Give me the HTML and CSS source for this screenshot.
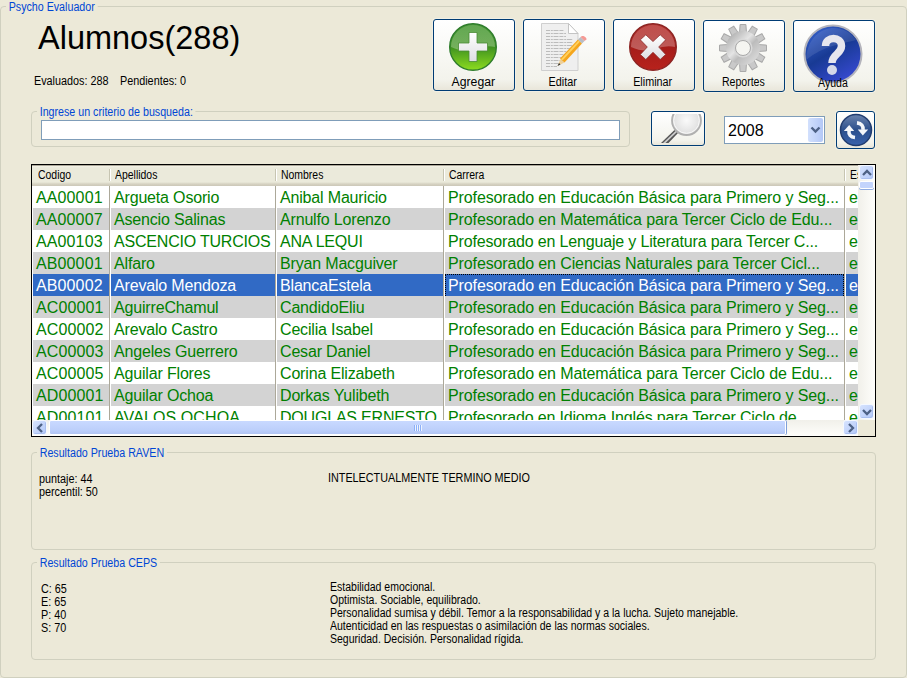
FILE: index.html
```html
<!DOCTYPE html>
<html lang="es">
<head>
<meta charset="utf-8">
<title>Psycho Evaluador</title>
<link rel="stylesheet" href="styles.css">
</head>
<body>
<main class="group app">
  <span class="legend">Psycho Evaluador</span>
  <header class="top">
    <div class="heading">
      <h1>Alumnos(288)</h1>
      <div class="stats"><span class="s s1">Evaluados: 288</span><span class="s">Pendientes: 0</span></div>
    </div>
    <nav class="tools">
      <button class="btn tool">
        <svg width="50" height="50" viewBox="0 0 50 50"><defs><linearGradient id="gr" x1="0" y1="0" x2="0" y2="1"><stop offset="0" stop-color="#4e9c3c"/><stop offset=".5" stop-color="#3f9220"/><stop offset="1" stop-color="#8ddc20"/></linearGradient><linearGradient id="sh" x1="0" y1="0" x2="0" y2="1"><stop offset="0" stop-color="#fff" stop-opacity=".12"/><stop offset="1" stop-color="#fff" stop-opacity=".3"/></linearGradient><linearGradient id="wh" x1="0" y1="0" x2="0" y2="1"><stop offset="0" stop-color="#fff"/><stop offset="1" stop-color="#dedee2"/></linearGradient></defs><circle cx="25" cy="25" r="23.3" fill="url(#gr)" stroke="#2f7d2c" stroke-width="1.4"/><path d="M3 25a22 22 0 0 1 44 0q-9-2-20 2t-24-2z" fill="url(#sh)"/><path d="M21 10.500h8v10.500h10.500v8H29V39.500h-8V29H10.500v-8H21z" fill="url(#wh)" stroke="#4a8a35" stroke-width=".8"/></svg>
        <span class="s">Agregar</span>
      </button>
      <button class="btn tool">
        <svg width="50" height="50" viewBox="0 0 50 50"><path d="M3.500 1.500h27l9.500 10v37H3.500z" fill="#efefef" stroke="#cfcfcf"/><path d="M30.500 1.500v10H40z" fill="#fff" stroke="#c4c4c4"/><path d="M8 8.500h18M8 11.500h20M8 14.500h20M8 17.500h27M8 20.500h27M8 23.500h28M8 26.500h26M8 29.500h26M8 32.500h22M8 35.500h20M8 38.500h18M8 41.500h13M8 44.500h11" stroke="#bcbcbc" stroke-width="1.200" stroke-dasharray="4 .8 2 .7 5 .9"/><path d="M19.500 44l3-7 4 3.500z" fill="#eed09a"/><path d="M19.500 44l1.500-3 1.500 1.400z" fill="#333"/><path d="M22 36.500L40 17.500l4 4L26.500 40.500z" fill="#f5a51c"/><path d="M23 37.200L40.500 18.500l1.400 1.200-17.400 18.700z" fill="#ffd05c"/><path d="M40 17.500l2.500-2.500 4 4-2.500 2.500z" fill="#b8bdc4"/><path d="M42.500 15l1.500-1c2-.5 5 2 4.500 3.500l-2 1.500z" fill="#f59a94"/></svg>
        <span class="s">Editar</span>
      </button>
      <button class="btn tool">
        <svg width="50" height="50" viewBox="0 0 50 50"><defs><linearGradient id="rd" x1="0" y1="0" x2="0" y2="1"><stop offset="0" stop-color="#b93835"/><stop offset=".5" stop-color="#a51d1a"/><stop offset="1" stop-color="#b8221c"/></linearGradient></defs><circle cx="25" cy="25" r="23.300" fill="url(#rd)" stroke="#8d2523" stroke-width="1.400"/><path d="M3 25a22 22 0 0 1 44 0q-9-2-20 2t-24-2z" fill="url(#sh)"/><path d="M25 19.500l7.200-6.700 5.500 5-7 7.200 7 7.500-5.500 5-7.200-7.200-7.200 7.200-5.500-5 7-7.500-7-7.200 5.500-5z" fill="url(#wh)" stroke="#8a2a28" stroke-width=".8"/></svg>
        <span class="s">Eliminar</span>
      </button>
      <button class="btn tool low">
        <svg width="50" height="50" viewBox="0 0 50 50"><defs><linearGradient id="si" x1="0" y1="0" x2="1" y2="1"><stop offset="0" stop-color="#b4b4b4"/><stop offset=".4" stop-color="#e4e4e4"/><stop offset=".6" stop-color="#bcbcbc"/><stop offset="1" stop-color="#d8d8d8"/></linearGradient><path id="tooth" d="M21.500 10L22.100 1.500h5.800L28.500 10z"/></defs><g fill="#c9c9c9" stroke="#a9a9a9" stroke-width="1"><use href="#tooth"/><use href="#tooth" transform="rotate(30 25 25)"/><use href="#tooth" transform="rotate(60 25 25)"/><use href="#tooth" transform="rotate(90 25 25)"/><use href="#tooth" transform="rotate(120 25 25)"/><use href="#tooth" transform="rotate(150 25 25)"/><use href="#tooth" transform="rotate(180 25 25)"/><use href="#tooth" transform="rotate(210 25 25)"/><use href="#tooth" transform="rotate(240 25 25)"/><use href="#tooth" transform="rotate(270 25 25)"/><use href="#tooth" transform="rotate(300 25 25)"/><use href="#tooth" transform="rotate(330 25 25)"/></g><circle cx="25" cy="25" r="12.500" fill="none" stroke="url(#si)" stroke-width="9"/><circle cx="25" cy="25" r="8.500" fill="#f5f5f1" stroke="#d9d9d9" stroke-width="2"/><circle cx="25" cy="25" r="7.500" fill="none" stroke="#a8a8a8"/></svg>
        <span class="s">Reportes</span>
      </button>
      <button class="btn tool low help">
        <svg width="60" height="60" viewBox="0 0 60 60"><defs><linearGradient id="bl" x1="0" y1="0" x2=".6" y2="1"><stop offset="0" stop-color="#3c68d4"/><stop offset=".55" stop-color="#183a94"/><stop offset="1" stop-color="#3448cc"/></linearGradient></defs><circle cx="30" cy="30" r="28.500" fill="url(#bl)" stroke="#b4b4bc" stroke-width="2"/><path d="M3 36C5 0 40-4 53 16 38 20 20 22 3 36z" fill="#fff" opacity=".1"/><path d="M22.500 22c0-10 16-10 16 0 0 8-9.500 8-9.500 17" fill="none" stroke="#e6e6ee" stroke-width="7.500"/><circle cx="29" cy="46" r="5" fill="#d4d8e8"/></svg>
        <span class="s">Ayuda</span>
      </button>
    </nav>
  </header>

  <section class="filters">
    <div class="group search">
      <span class="legend">Ingrese un criterio de busqueda:</span>
      <input type="text" aria-label="Buscar">
    </div>
    <button class="btn find" aria-label="Buscar"><svg width="52" height="33" viewBox="0 0 52 33"><defs><radialGradient id="ln"><stop offset="0" stop-color="#fafafa"/><stop offset="1" stop-color="#dedede"/></radialGradient><clipPath id="cut"><path d="M0 2h52v29H0z"/></clipPath></defs><g clip-path="url(#cut)"><path d="M22.500 18L9 31h7.500L26 21z" fill="#555"/><path d="M23.500 19L11 31h2.500L25 20z" fill="#ccc"/><circle cx="34.500" cy="8.500" r="14.500" fill="url(#ln)" stroke="#b0b0b0" stroke-width="1.800"/><circle cx="34.500" cy="8.500" r="12.800" fill="none" stroke="#f8f8f8"/></g></svg></button>
    <div class="combo"><span class="year">2008</span><span class="drop"><svg width="11" height="8" viewBox="0 0 11 8"><path d="M1.500 1.500l4 4 4-4" fill="none" stroke="#4d6185" stroke-width="2.400"/></svg></span></div>
    <button class="btn refresh" aria-label="Actualizar"><svg width="36" height="36" viewBox="0 0 36 36"><defs><linearGradient id="rf" x1="0" y1="0" x2="0" y2="1"><stop offset="0" stop-color="#6b83ad"/><stop offset=".5" stop-color="#2c4f8c"/><stop offset="1" stop-color="#3962ac"/></linearGradient><g id="arr"><path d="M17 25.500c-4.500-.5-6.500-3-6-7" fill="none" stroke="#f4f6fa" stroke-width="3.600"/><path d="M5.800 19l5.400-6 5 6z" fill="#f4f6fa"/></g></defs><circle cx="18" cy="18" r="15.500" fill="url(#rf)" stroke="#223d70" stroke-width="1.500"/><use href="#arr"/><use href="#arr" transform="rotate(180 18 18.200)"/></svg></button>
  </section>

  <section class="listview">
    <div class="view">
      <div class="row head"><span><b class="s">Codigo</b></span><span><b class="s">Apellidos</b></span><span><b class="s">Nombres</b></span><span><b class="s">Carrera</b></span><span><b class="s">Es</b></span></div>
      <div class="row"><span>AA00001</span><span>Argueta Osorio</span><span>Anibal Mauricio</span><span>Profesorado en Educación Básica para Primero y Seg...</span><span>e</span></div>
      <div class="row alt"><span>AA00007</span><span>Asencio Salinas</span><span>Arnulfo Lorenzo</span><span>Profesorado en Matemática para Tercer Ciclo de Edu...</span><span>e</span></div>
      <div class="row"><span>AA00103</span><span class="caps">ASCENCIO TURCIOS</span><span class="caps">ANA LEQUI</span><span class="snug">Profesorado en Lenguaje y Literatura para Tercer C...</span><span>e</span></div>
      <div class="row alt"><span>AB00001</span><span>Alfaro</span><span>Bryan Macguiver</span><span>Profesorado en Ciencias Naturales para Tercer Cicl...</span><span>e</span></div>
      <div class="row sel"><span>AB00002</span><span>Arevalo Mendoza</span><span>BlancaEstela</span><span class="focus">Profesorado en Educación Básica para Primero y Seg...</span><span>e</span></div>
      <div class="row alt"><span>AC00001</span><span>AguirreChamul</span><span>CandidoEliu</span><span>Profesorado en Educación Básica para Primero y Seg...</span><span>e</span></div>
      <div class="row"><span>AC00002</span><span>Arevalo Castro</span><span>Cecilia Isabel</span><span>Profesorado en Educación Básica para Primero y Seg...</span><span>e</span></div>
      <div class="row alt"><span>AC00003</span><span>Angeles Guerrero</span><span>Cesar Daniel</span><span>Profesorado en Educación Básica para Primero y Seg...</span><span>e</span></div>
      <div class="row"><span>AC00005</span><span>Aguilar Flores</span><span>Corina Elizabeth</span><span>Profesorado en Matemática para Tercer Ciclo de Edu...</span><span>e</span></div>
      <div class="row alt"><span>AD00001</span><span>Aguilar Ochoa</span><span>Dorkas Yulibeth</span><span>Profesorado en Educación Básica para Primero y Seg...</span><span>e</span></div>
      <div class="row"><span>AD00101</span><span class="caps wide">AVALOS OCHOA</span><span class="caps">DOUGLAS ERNESTO</span><span class="snug">Profesorado en Idioma Inglés para Tercer Ciclo de</span><span>e</span></div>
    </div>
    <div class="vbar">
      <span class="sb"><svg width="10" height="8" viewBox="0 0 10 8"><path d="M1 6l4-4 4 4" fill="none" stroke="#4d6185" stroke-width="2.300"/></svg></span>
      <span class="vthumb"></span>
      <span class="sb end"><svg width="10" height="8" viewBox="0 0 10 8"><path d="M1 2l4 4 4-4" fill="none" stroke="#4d6185" stroke-width="2.300"/></svg></span>
    </div>
    <div class="hbar">
      <span class="sb"><svg width="8" height="10" viewBox="0 0 8 10"><path d="M6 1L2 5l4 4" fill="none" stroke="#4d6185" stroke-width="2.300"/></svg></span>
      <span class="hthumb"><i></i></span>
      <span class="sb right"><svg width="8" height="10" viewBox="0 0 8 10"><path d="M2 1l4 4-4 4" fill="none" stroke="#4d6185" stroke-width="2.300"/></svg></span>
    </div>
  </section>

  <section class="group result raven">
    <span class="legend">Resultado Prueba RAVEN</span>
    <div class="scores"><p class="s">puntaje: 44</p><p class="s">percentil: 50</p></div>
    <div class="notes"><p class="s">INTELECTUALMENTE TERMINO MEDIO</p></div>
  </section>

  <section class="group result ceps">
    <span class="legend">Resultado Prueba CEPS</span>
    <div class="scores"><p class="s">C: 65</p><p class="s">E: 65</p><p class="s">P: 40</p><p class="s">S: 70</p></div>
    <div class="notes"><p class="s">Estabilidad emocional.</p><p class="s">Optimista. Sociable, equilibrado.</p><p class="s">Personalidad sumisa y débil. Temor a la responsabilidad y a la lucha. Sujeto manejable.</p><p class="s">Autenticidad en las respuestas o asimilación de las normas sociales.</p><p class="s">Seguridad. Decisión. Personalidad rígida.</p></div>
  </section>
</main>
</body>
</html>
```
FILE: styles.css
```css
* { box-sizing: border-box; }
body {
  margin: 0;
  padding-top: 6px;
  height: 678px;
  overflow: hidden;
  background: #ece9d8;
  color: #000;
  font-family: "Liberation Sans", sans-serif;
}
h1, p { margin: 0; font-weight: normal; }

.group { position: relative; border: 1px solid #d0d0bf; border-radius: 4px; }
.app { width: 907px; height: 672px; padding: 0 30px; }

/* Small interface text: slightly condensed */
.s, .legend {
  display: inline-block;
  font-size: 12px;
  line-height: 13px;
  font-weight: normal;
  white-space: nowrap;
  transform: scaleX(.9);
  transform-origin: 0 50%;
}
.legend {
  position: absolute;
  top: -6px;
  left: 5px;
  padding: 0 3px;
  background: #ece9d8;
  color: #0046d5;
  transform: scaleX(.89);
}

.top { display: flex; height: 98px; padding-top: 12px; }
.heading { width: 402px; }
.heading h1 {
  margin: -1px 0 0 7px;
  font-size: 32.500px;
  line-height: 40px;
}
.stats { display: flex; margin: 17px 0 0 3px; }
.s1 { width: 86px; }

.btn {
  display: flex;
  align-items: center;
  justify-content: center;
  padding: 0;
  border: 1px solid #003c74;
  border-radius: 3px;
  background: linear-gradient(#fff, #f3f3ec 85%, #e9e6da);
  box-shadow: 0 0 0 1px #f1efe4;
  font-family: inherit;
}
.tools { display: flex; gap: 8px; }
.tool { position: relative; flex-direction: column; justify-content: flex-start; width: 82px; height: 72px; padding-top: 2px; }
.tool .s { margin: 4px 2px 0 0; transform-origin: 50% 50%; }
.tool svg { margin-left: -2px; }
.tool:first-child .s { transform: scaleX(1.02); }
.low { margin-top: 1px; padding-top: 2px; }
.tool.low .s { margin-top: 3px; transform: scaleX(.88); }
.help { padding-top: 3px; }
.help svg { flex: none; }
.tool.help .s { margin-top: -7px; }

.filters { display: flex; height: 65px; align-items: flex-start; padding-top: 6px; }
.search { width: 599px; height: 36px; padding: 8px 9px; }
.search input { display: block; width: 579px; height: 20px; border: 1px solid #7f9db9; background: #fff; padding: 0; }
.find { width: 54px; height: 35px; margin-left: 21px; }
.combo {
  display: flex;
  width: 101px;
  height: 28px;
  margin: 5px 0 0 19px;
  padding: 1px;
  border: 1px solid #7f9db9;
  background: #fff;
}
.year { flex: 1; padding-left: 2px; font-size: 16px; line-height: 26px; }
.drop { display: flex; align-items: center; justify-content: center; width: 15px; border-radius: 2px; background: linear-gradient(90deg, #d2e0fd, #b4c8f6); }
.refresh { width: 39px; height: 38px; margin-left: 11px; }

.listview {
  display: grid;
  grid-template: 255px 16px / 826px 17px;
  width: 845px;
  height: 273px;
  margin-top: -6px;
  border: 1px solid #000;
}
.view { overflow: hidden; padding-left: 1px; background: #fff; border-top: 1px solid #aca899; }
.row {
  display: grid;
  grid-template-columns: 76px 164px 166px 399px 12px;
  column-gap: 2px;
  width: 825px;
  height: 22px;
  color: #008000;
  font-size: 16px;
  line-height: 24px;
  white-space: nowrap;
}
.row > span { position: relative; padding-left: 3px; background: #fff; letter-spacing: -.17px; }
.row > span:first-child { letter-spacing: .12px; }
.row > span:nth-child(4) { letter-spacing: -.11px; }
.row > .snug:nth-child(4) { letter-spacing: -.16px; }
.row > span + span::before { content: ""; position: absolute; left: -2px; top: 0; width: 1px; height: 22px; background: #aca899; }
.row > .caps { letter-spacing: -.2px; }
.row > .wide { letter-spacing: .1px; }
.alt > span { background: #d3d3d3; }
.sel { color: #fff; }
.sel > span { background: #316ac5; }
.sel > .focus { outline: 1px dotted #000; outline-offset: -1px; }
.head { height: 20px; margin-left: -1px; width: 826px; padding-left: 1px; color: #000; background: linear-gradient(#f4f2e8 0, #ebeadb 2px, #ebeadb 16px, #d6d2c2 18px, #cbc7b8); }
.row.head > span { background: none; padding: 3px 0 0 5px; line-height: 13px; letter-spacing: 0; }
.head .s { vertical-align: top; transform: scaleX(.87); }
.row.head > span + span { padding-left: 4px; }
.head > span + span::before { top: 3px; height: 12px; background: #c7c5b2; box-shadow: 1px 0 #fff; }

.sb {
  display: flex;
  align-items: center;
  justify-content: center;
  flex: none;
  width: 15px;
  height: 15px;
  border: 1px solid #f4f8ff;
  border-radius: 3px;
  background: linear-gradient(135deg, #d6e3fe, #b3c8f8);
  box-shadow: inset -1px -1px #a9bff0;
}
.vbar { display: flex; flex-direction: column; padding: 0 0 1px 1px; background: linear-gradient(90deg, #f1f0ea, #fefefb); }
.vthumb { width: 15px; height: 8px; margin-top: 1px; border: 1px solid #fff; border-radius: 2px; background: #c3d4fc; box-shadow: 0 1px #8fabe0; }
.end { margin-top: auto; }
.hbar { display: flex; padding: 0; background: linear-gradient(#f1f0ea, #fefefb); }
.hthumb { display: flex; align-items: center; justify-content: center; width: 737px; height: 15px; margin-left: 2px; border: 1px solid #fff; border-radius: 2px; background: linear-gradient(#c9d9ff, #bccffb 70%, #b1c5f3); box-shadow: 1px 0 #7f9fd8; }
.hthumb i { width: 8px; height: 6px; background: repeating-linear-gradient(90deg, #8cb0f8 0 1px, #eef4fe 1px 2px); }
.right { margin-left: auto; }

.result { display: flex; width: 845px; height: 98px; }
.raven { margin-top: 15px; padding: 19px 0 0 7px; }
.ceps { margin-top: 12px; padding: 19px 0 0 9px; }
.result .s { display: block; }
.scores { width: 289px; padding-top: 1px; }
.ceps .notes { margin-top: -1px; }
.ceps .notes .s { transform: scaleX(.876); }
```
